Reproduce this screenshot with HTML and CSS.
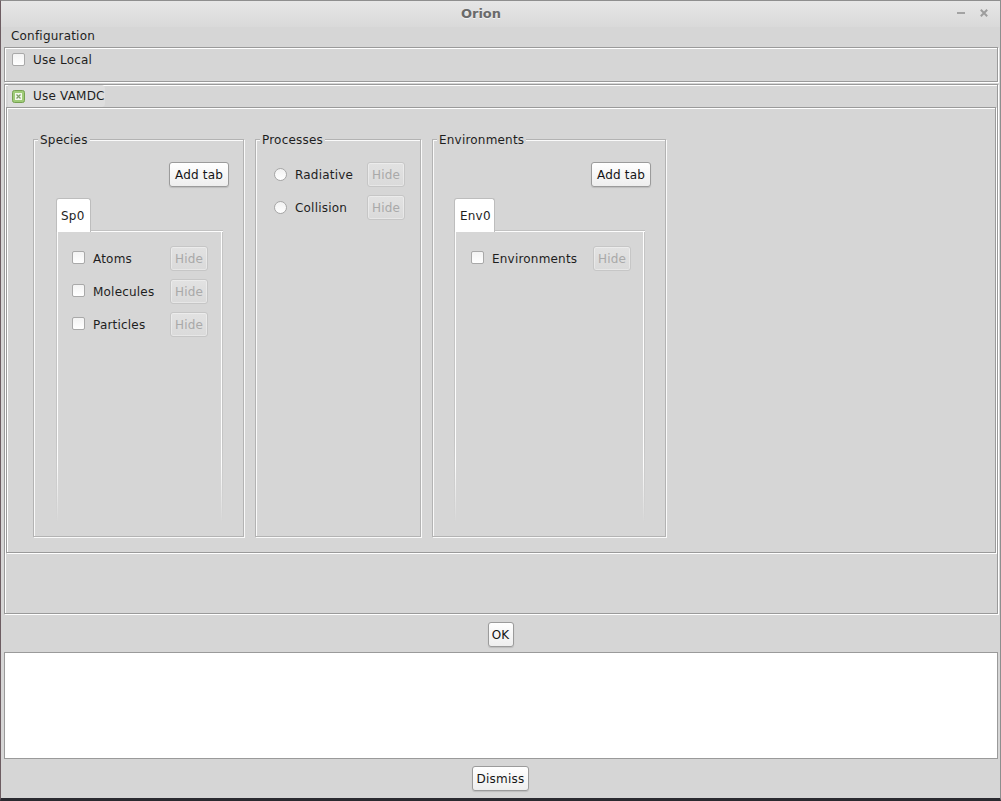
FILE: index.html
```html
<!DOCTYPE html>
<html lang="en">
<head>
<meta charset="utf-8">
<title>Orion</title>
<link rel="stylesheet" href="styles.css">
</head>
<body>
<div class="window">
  <div class="titlebar">
    <span class="title">Orion</span>
    <div class="wm-controls">
      <svg class="wm-min" width="8" height="8" viewBox="0 0 8 8"><rect x="0" y="3" width="8" height="2" fill="#a3a3a3"/></svg>
      <svg class="wm-close" width="8" height="8" viewBox="0 0 8 8"><path d="M0.8 0.8L7.2 7.2M7.2 0.8L0.8 7.2" stroke="#9d9d9d" stroke-width="2"/></svg>
    </div>
  </div>
  <div class="menubar"><span class="menu">Configuration</span></div>

  <div class="panel local">
    <label class="check"><span class="box"></span><span>Use Local</span></label>
  </div>

  <div class="panel vamdc">
    <div class="panel-title">
      <span class="box checked"><svg width="13" height="13" viewBox="0 0 13 13"><rect x="0.5" y="0.5" width="12" height="12" rx="2" fill="#9fcb78" stroke="#76a152"/><rect x="3" y="3" width="7" height="7" fill="#f3f8ec"/><path d="M4.5 4.5L8.5 8.5M8.5 4.5L4.5 8.5" stroke="#7f9f68" stroke-width="1.3"/></svg></span>
      <span>Use VAMDC</span>
    </div>
    <div class="inner">
      <div class="group species">
        <div class="group-title">Species</div>
        <div class="toolbar"><button class="btn add">Add tab</button></div>
        <div class="tabs"><div class="tab">Sp0</div></div>
        <div class="tabpanel">
          <div class="row"><label class="check"><span class="box"></span><span>Atoms</span></label><button class="btn hide" disabled>Hide</button></div>
          <div class="row"><label class="check"><span class="box"></span><span>Molecules</span></label><button class="btn hide" disabled>Hide</button></div>
          <div class="row"><label class="check"><span class="box"></span><span>Particles</span></label><button class="btn hide" disabled>Hide</button></div>
        </div>
      </div>

      <div class="group processes">
        <div class="group-title">Processes</div>
        <div class="proc-rows">
          <div class="row"><label class="check"><span class="radio"></span><span>Radiative</span></label><button class="btn hide" disabled>Hide</button></div>
          <div class="row"><label class="check"><span class="radio"></span><span>Collision</span></label><button class="btn hide" disabled>Hide</button></div>
        </div>
      </div>

      <div class="group environments">
        <div class="group-title">Environments</div>
        <div class="toolbar"><button class="btn add">Add tab</button></div>
        <div class="tabs env-tabs"><div class="tab env-tab">Env0</div></div>
        <div class="tabpanel env-panel">
          <div class="row"><label class="check"><span class="box"></span><span>Environments</span></label><button class="btn hide" disabled>Hide</button></div>
        </div>
      </div>
    </div>
  </div>

  <div class="button-row ok-row"><button class="btn ok">OK</button></div>
  <div class="textarea"></div>
  <div class="button-row dismiss-row"><button class="btn dismiss">Dismiss</button></div>
</div>
</body>
</html>
```
FILE: styles.css
```css
* { box-sizing: border-box; }
html, body { margin: 0; padding: 0; }
body {
  background: #2e2a33;
  font-family: "DejaVu Sans", "Liberation Sans", sans-serif;
  font-size: 12px;
  letter-spacing: 0.2px;
  color: #1e1e1e;
}
.window {
  width: 1001px;
  height: 801px;
  display: flex;
  flex-direction: column;
  background: #d6d6d6;
  border: 1px solid #8e8e8e;
  border-left-color: #6d5d62;
  border-bottom: 3px solid #2a2a30;
}
.titlebar {
  height: 26px;
  flex: none;
  display: flex;
  align-items: center;
  padding-bottom: 2px;
  background: linear-gradient(#e6e6e6, #d9d9d9);
}
.title {
  flex: 1;
  text-align: center;
  padding-left: 10px;
  font-weight: bold;
  font-size: 13px;
  letter-spacing: 0;
  color: #6a6a6a;
  text-shadow: 0 1px 0 rgba(255,255,255,0.6);
}
.wm-controls {
  width: 49px;
  display: flex;
  align-items: center;
  padding-left: 6px;
  gap: 15px;
}
.wm-controls svg { display: block; }
.menubar {
  height: 20px;
  flex: none;
  padding-left: 10px;
  line-height: 18px;
}
.panel {
  flex: none;
  margin: 0 2px 0 3px;
  border: 1px solid #9a9a9a;
  box-shadow: inset 1px 1px 0 #fff, 1px 1px 0 #fff;
}
.local {
  height: 35px;
  padding: 1px 0 0 7px;
}
.check {
  display: flex;
  align-items: center;
  gap: 8px;
  height: 20px;
  white-space: nowrap;
}
.local .check { height: 21px; }
.box {
  width: 13px;
  height: 13px;
  flex: none;
  border: 1px solid #a9a9a9;
  border-radius: 2px;
  background: linear-gradient(#f3f3f3, #ffffff);
  margin-bottom: 2px;
}
.local .box { margin-bottom: 0; }
.box.checked {
  border: none;
  background: none;
  margin-bottom: 0;
}
.box.checked svg { display: block; }
.radio {
  width: 13px;
  height: 13px;
  flex: none;
  border: 1px solid #a6a6a6;
  border-radius: 50%;
  background: linear-gradient(#f2f2f2, #ffffff);
}
.vamdc {
  height: 530px;
  margin-top: 2px;
  display: flex;
  flex-direction: column;
}
.panel-title {
  height: 22px;
  width: 97px;
  margin-left: 3px;
  padding-left: 4px;
  display: flex;
  align-items: center;
  gap: 8px;
  background: #dedede;
  border-radius: 0 4px 4px 0;
}
.inner {
  height: 446px;
  margin: 0 1px;
  border: 1px solid #9a9a9a;
  box-shadow: inset 1px 1px 0 #fff, 1px 1px 0 #fff;
  padding: 31px 0 0 26px;
  display: flex;
  align-items: flex-start;
  gap: 11px;
}
.group {
  height: 398px;
  border: 1px solid #b3b3b3;
  box-shadow: inset 1px 1px 0 #fafafa, 1px 1px 0 #fafafa;
  display: flex;
  flex-direction: column;
}
.species { width: 211px; }
.processes { width: 166px; }
.environments { width: 234px; }
.group-title {
  align-self: flex-start;
  margin: -7px 0 0 4px;
  padding: 0 2px;
  line-height: 15px;
  background: #d6d6d6;
}
.toolbar {
  display: flex;
  justify-content: flex-end;
  margin: 14px 14px 0 0;
}
.btn {
  height: 25px;
  padding: 0;
  font-family: "DejaVu Sans", "Liberation Sans", sans-serif;
  font-size: 12px;
  letter-spacing: 0.2px;
  color: #151515;
  border: 1px solid #9b9b9b;
  border-radius: 3px;
  background: linear-gradient(#ffffff, #eeeeee);
  box-shadow: 0 1px 1px rgba(0,0,0,0.12);
}
.btn.add { width: 60px; }
.btn.ok { width: 26px; }
.btn.dismiss { width: 57px; }
.btn.hide {
  width: 38px;
  color: #a9a9a9;
  border-color: #c6c6c6;
  background: linear-gradient(#e2e2e2, #dadada);
  box-shadow: inset 0 0 0 1px rgba(255,255,255,0.35);
}
.tabs {
  display: flex;
  margin: 11px 0 0 22px;
  position: relative;
  z-index: 1;
}
.env-tabs { margin-left: 21px; }
.tab {
  width: 35px;
  height: 34px;
  margin-bottom: -1px;
  padding: 10px 0 0 4px;
  line-height: 15px;
  background: #fff;
  border: 1px solid #bdbdbd;
  border-bottom: none;
  border-radius: 3px 3px 0 0;
}
.env-tab { width: 41px; padding-left: 5px; }
.tabpanel {
  flex: 1;
  margin: 0 20px 14px 22px;
  padding: 14px 15px 0 16px;
  border-top: 1px solid #fdfdfd;
  box-shadow: 0 -1px 0 #c2c2c2;
  display: flex;
  flex-direction: column;
  gap: 8px;
  background-image:
    linear-gradient(to bottom, #fdfdfd 0, #fdfdfd 80%, rgba(253,253,253,0) 100%),
    linear-gradient(to bottom, #fdfdfd 0, #fdfdfd 80%, rgba(253,253,253,0) 100%),
    linear-gradient(to bottom, #c4c4c4 0, #c4c4c4 70%, rgba(196,196,196,0) 100%),
    linear-gradient(to bottom, #c4c4c4 0, #c4c4c4 70%, rgba(196,196,196,0) 100%);
  background-size: 1px 100%, 1px 100%, 1px 100%, 1px 100%;
  background-position: 1px 0, calc(100% - 1px) 0, 0 0, 100% 0;
  background-repeat: no-repeat;
}
.env-panel {
  margin-left: 21px;
  padding: 14px 14px 0 17px;
}
.row {
  height: 25px;
  display: flex;
  align-items: center;
  justify-content: space-between;
}
.proc-rows {
  margin: 14px 15px 0 18px;
  display: flex;
  flex-direction: column;
  gap: 8px;
}
.button-row {
  flex: none;
  display: flex;
  justify-content: center;
}
.ok-row { height: 38px; padding-top: 8px; }
.textarea {
  flex: none;
  height: 107px;
  margin: 0 2px 0 3px;
  background: #fff;
  border: 1px solid #9a9a9a;
}
.dismiss-row { height: 39px; padding-top: 7px; }
```
